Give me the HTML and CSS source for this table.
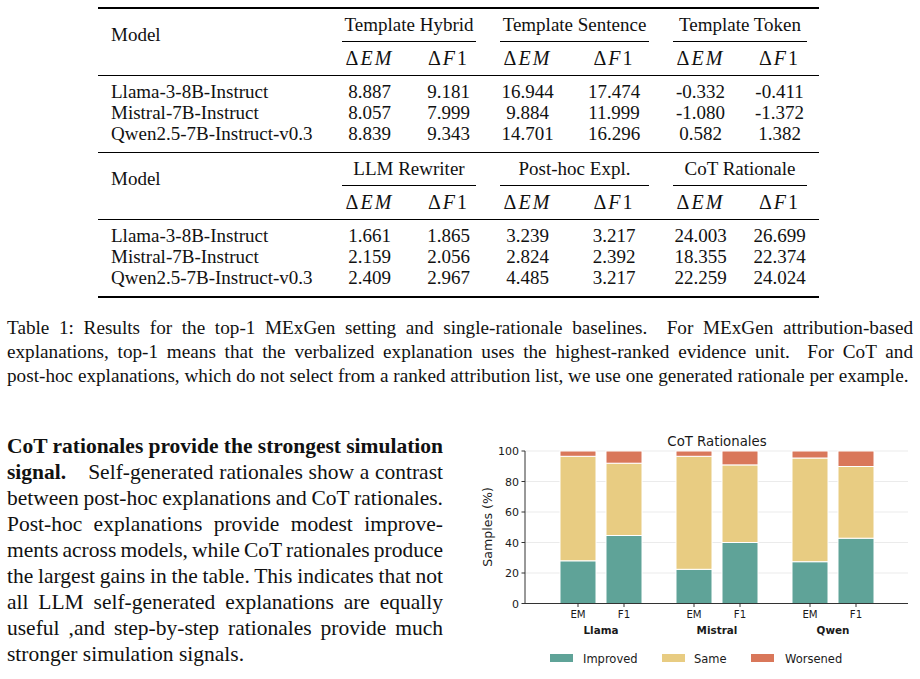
FILE: index.html
```html
<!DOCTYPE html>
<html lang="en">
<head>
    <meta charset="UTF-8">
    <meta name="viewport" content="width=device-width, initial-scale=1.0">
    <title>Table 1 - CoT Rationales</title>
    <link rel="stylesheet" href="styles.css">
</head>
<body>
    <div class="page">
        <table class="results">
            <colgroup>
                <col class="c-model">
                <col class="c-num"><col class="c-num">
                <col class="c-num"><col class="c-wide">
                <col class="c-num"><col class="c-num">
            </colgroup>
            <tbody class="block">
                <tr class="group-row">
                    <th rowspan="2" class="model-head">Model</th>
                    <th colspan="2"><div class="cmid">Template Hybrid</div></th>
                    <th colspan="2"><div class="cmid">Template Sentence</div></th>
                    <th colspan="2"><div class="cmid">Template Token</div></th>
                </tr>
                <tr class="metric-row">
                    <td><span class="math">Δ<i>EM</i></span></td>
                    <td><span class="math">Δ<i>F</i>1</span></td>
                    <td><span class="math">Δ<i>EM</i></span></td>
                    <td><span class="math">Δ<i>F</i>1</span></td>
                    <td><span class="math">Δ<i>EM</i></span></td>
                    <td><span class="math">Δ<i>F</i>1</span></td>
                </tr>
                <tr class="data first">
                    <td class="name">Llama-3-8B-Instruct</td>
                    <td>8.887</td><td>9.181</td><td>16.944</td><td>17.474</td><td>-0.332</td><td>-0.411</td>
                </tr>
                <tr class="data">
                    <td class="name">Mistral-7B-Instruct</td>
                    <td>8.057</td><td>7.999</td><td>9.884</td><td>11.999</td><td>-1.080</td><td>-1.372</td>
                </tr>
                <tr class="data last">
                    <td class="name">Qwen2.5-7B-Instruct-v0.3</td>
                    <td>8.839</td><td>9.343</td><td>14.701</td><td>16.296</td><td>0.582</td><td>1.382</td>
                </tr>
            </tbody>
            <tbody class="block">
                <tr class="group-row">
                    <th rowspan="2" class="model-head">Model</th>
                    <th colspan="2"><div class="cmid">LLM Rewriter</div></th>
                    <th colspan="2"><div class="cmid">Post-hoc Expl.</div></th>
                    <th colspan="2"><div class="cmid">CoT Rationale</div></th>
                </tr>
                <tr class="metric-row">
                    <td><span class="math">Δ<i>EM</i></span></td>
                    <td><span class="math">Δ<i>F</i>1</span></td>
                    <td><span class="math">Δ<i>EM</i></span></td>
                    <td><span class="math">Δ<i>F</i>1</span></td>
                    <td><span class="math">Δ<i>EM</i></span></td>
                    <td><span class="math">Δ<i>F</i>1</span></td>
                </tr>
                <tr class="data first">
                    <td class="name">Llama-3-8B-Instruct</td>
                    <td>1.661</td><td>1.865</td><td>3.239</td><td>3.217</td><td>24.003</td><td>26.699</td>
                </tr>
                <tr class="data">
                    <td class="name">Mistral-7B-Instruct</td>
                    <td>2.159</td><td>2.056</td><td>2.824</td><td>2.392</td><td>18.355</td><td>22.374</td>
                </tr>
                <tr class="data last">
                    <td class="name">Qwen2.5-7B-Instruct-v0.3</td>
                    <td>2.409</td><td>2.967</td><td>4.485</td><td>3.217</td><td>22.259</td><td>24.024</td>
                </tr>
            </tbody>
        </table>

        <p class="caption">
            <span class="ln">Table 1: Results for the top-1 MExGen setting and single-rationale baselines. &nbsp;For MExGen attribution-based</span>
            <span class="ln">explanations, top-1 means that the verbalized explanation uses the highest-ranked evidence unit. &nbsp;For CoT and</span>
            <span class="ln end">post-hoc explanations, which do not select from a ranked attribution list, we use one generated rationale per example.</span>
        </p>

        <div class="lower">
            <p class="body-text">
                <span class="ln"><b>CoT rationales provide the strongest simulation</b></span>
                <span class="ln"><b>signal.</b><span class="gap"></span>Self-generated rationales show a contrast</span>
                <span class="ln">between post-hoc explanations and CoT rationales.</span>
                <span class="ln">Post-hoc explanations provide modest improve-</span>
                <span class="ln">ments across models, while CoT rationales produce</span>
                <span class="ln">the largest gains in the table. This indicates that not</span>
                <span class="ln">all LLM self-generated explanations are equally</span>
                <span class="ln">useful ,and step-by-step rationales provide much</span>
                <span class="ln end">stronger simulation signals.</span>
            </p>

            <svg class="chart" width="450" height="254" viewBox="0 0 450 254">
                <text class="title" x="247" y="21" text-anchor="middle">CoT Rationales</text>

                <g class="grid">
                    <line x1="55" y1="26" x2="438" y2="26"/>
                    <line x1="55" y1="56.5" x2="438" y2="56.5"/>
                    <line x1="55" y1="87" x2="438" y2="87"/>
                    <line x1="55" y1="117.5" x2="438" y2="117.5"/>
                    <line x1="55" y1="148" x2="438" y2="148"/>
                </g>

                <!-- Llama -->
                <g class="bars">
                    <rect class="imp" x="90" y="135.8" width="36" height="42.7"/>
                    <rect class="same" x="90" y="31.3" width="36" height="104.5"/>
                    <rect class="worse" x="90" y="26" width="36" height="5.3"/>
                    <rect class="imp" x="136" y="110.5" width="36" height="68"/>
                    <rect class="same" x="136" y="38.2" width="36" height="72.3"/>
                    <rect class="worse" x="136" y="26" width="36" height="12.2"/>
                    <!-- Mistral -->
                    <rect class="imp" x="206" y="144.3" width="36" height="34.2"/>
                    <rect class="same" x="206" y="31.3" width="36" height="113"/>
                    <rect class="worse" x="206" y="26" width="36" height="5.3"/>
                    <rect class="imp" x="252" y="117.5" width="36" height="61"/>
                    <rect class="same" x="252" y="39.9" width="36" height="77.6"/>
                    <rect class="worse" x="252" y="26" width="36" height="13.9"/>
                    <!-- Qwen -->
                    <rect class="imp" x="322" y="136.7" width="36" height="41.8"/>
                    <rect class="same" x="322" y="33" width="36" height="103.7"/>
                    <rect class="worse" x="322" y="26" width="36" height="7"/>
                    <rect class="imp" x="368" y="113.2" width="36" height="65.3"/>
                    <rect class="same" x="368" y="41.5" width="36" height="71.7"/>
                    <rect class="worse" x="368" y="26" width="36" height="15.5"/>
                </g>

                <g class="axis">
                    <line x1="55" y1="26" x2="55" y2="178.5"/>
                    <line x1="55" y1="178.5" x2="438" y2="178.5"/>
                    <line x1="51.5" y1="26" x2="55" y2="26"/>
                    <line x1="51.5" y1="56.5" x2="55" y2="56.5"/>
                    <line x1="51.5" y1="87" x2="55" y2="87"/>
                    <line x1="51.5" y1="117.5" x2="55" y2="117.5"/>
                    <line x1="51.5" y1="148" x2="55" y2="148"/>
                    <line x1="51.5" y1="178.5" x2="55" y2="178.5"/>
                    <line x1="108" y1="178.5" x2="108" y2="182"/>
                    <line x1="154" y1="178.5" x2="154" y2="182"/>
                    <line x1="224" y1="178.5" x2="224" y2="182"/>
                    <line x1="270" y1="178.5" x2="270" y2="182"/>
                    <line x1="340" y1="178.5" x2="340" y2="182"/>
                    <line x1="386" y1="178.5" x2="386" y2="182"/>
                </g>

                <g class="ticks" text-anchor="end">
                    <text x="49" y="30">100</text>
                    <text x="49" y="60.5">80</text>
                    <text x="49" y="91">60</text>
                    <text x="49" y="121.5">40</text>
                    <text x="49" y="152">20</text>
                    <text x="49" y="182.5">0</text>
                </g>

                <text class="ylabel" transform="translate(22 102) rotate(-90)" text-anchor="middle">Samples (%)</text>

                <g class="xticks" text-anchor="middle">
                    <text x="108" y="193">EM</text>
                    <text x="154" y="193">F1</text>
                    <text x="224" y="193">EM</text>
                    <text x="270" y="193">F1</text>
                    <text x="340" y="193">EM</text>
                    <text x="386" y="193">F1</text>
                </g>
                <g class="groups" text-anchor="middle">
                    <text x="131" y="209">Llama</text>
                    <text x="247" y="209">Mistral</text>
                    <text x="363" y="209">Qwen</text>
                </g>

                <g class="legend">
                    <rect class="imp" x="80" y="229" width="23" height="8"/>
                    <text x="113" y="237.5">Improved</text>
                    <rect class="same" x="192" y="229" width="23" height="8"/>
                    <text x="224" y="237.5">Same</text>
                    <rect class="worse" x="281" y="229" width="23" height="8"/>
                    <text x="315" y="237.5">Worsened</text>
                </g>
            </svg>
        </div>
    </div>
</body>
</html>
```

FILE: styles.css
```css
body {
    margin: 0;
    background: #fff;
    color: #111;
    font-family: "Liberation Serif", "Times New Roman", serif;
}

.page {
    width: 920px;
    padding-top: 7px;
}

/* ---------- results table ---------- */

.results {
    margin-left: 98px;
    width: 720px;
    table-layout: fixed;
    border-collapse: collapse;
    border-top: 2px solid #000;
    border-bottom: 2px solid #000;
    font-size: 19px;
}

.c-model { width: 232px; }
.c-num { width: 79px; }
.c-wide { width: 94px; }

.block + .block {
    border-top: 1px solid #000;
}

.results th,
.results td {
    padding: 0;
    text-align: center;
    font-weight: normal;
    white-space: nowrap;
}

.results .model-head {
    text-align: left;
    vertical-align: top;
    padding: 15px 0 0 13px;
    line-height: 21px;
}

.cmid {
    margin: 0 12px;
    height: 32px;
    line-height: 32px;
    border-bottom: 1px solid #000;
}

.metric-row td {
    height: 33px;
    line-height: 33px;
}

.math {
    font-size: 20px;
    letter-spacing: 2px;
}

.data td {
    line-height: 21px;
}

.data.first td {
    border-top: 1px solid #000;
    padding-top: 5px;
}

.data.last td {
    padding-bottom: 8px;
}

.results .name {
    text-align: left;
    padding-left: 13px;
}

/* ---------- caption + body text ---------- */

.ln {
    display: block;
    text-align: justify;
    text-align-last: justify;
}

.ln.end {
    text-align-last: left;
}

.caption {
    width: 906px;
    margin: 18px 0 0 7px;
    font-size: 19.2px;
    line-height: 24px;
}

.lower {
    display: flex;
    margin-top: 37px;
}

.body-text {
    width: 436px;
    margin: 8px 0 0 7px;
    font-size: 21.5px;
    line-height: 26px;
    word-spacing: -2px;
}

.body-text .ln.end {
    word-spacing: 0;
}

.gap {
    display: inline-block;
    width: 22px;
}

/* ---------- chart ---------- */

.chart {
    display: block;
    margin-left: 27px;
    font-family: "DejaVu Sans", sans-serif;
    fill: #1a1a1a;
}

.chart .title { font-size: 13.3px; }
.chart .ticks { font-size: 11px; }
.chart .ylabel { font-size: 12.6px; }
.chart .xticks { font-size: 10.2px; }
.chart .groups { font-size: 10.4px; font-weight: bold; }
.chart .legend text { font-size: 11.5px; }

.grid line {
    stroke: #ebebeb;
    stroke-width: 1;
}

.axis line {
    stroke: #333;
    stroke-width: 1;
}

.bars rect {
    stroke: #fff;
    stroke-width: 1;
}

.imp { fill: #5fa398; }
.same { fill: #e8cc82; }
.worse { fill: #d9775a; }
```
